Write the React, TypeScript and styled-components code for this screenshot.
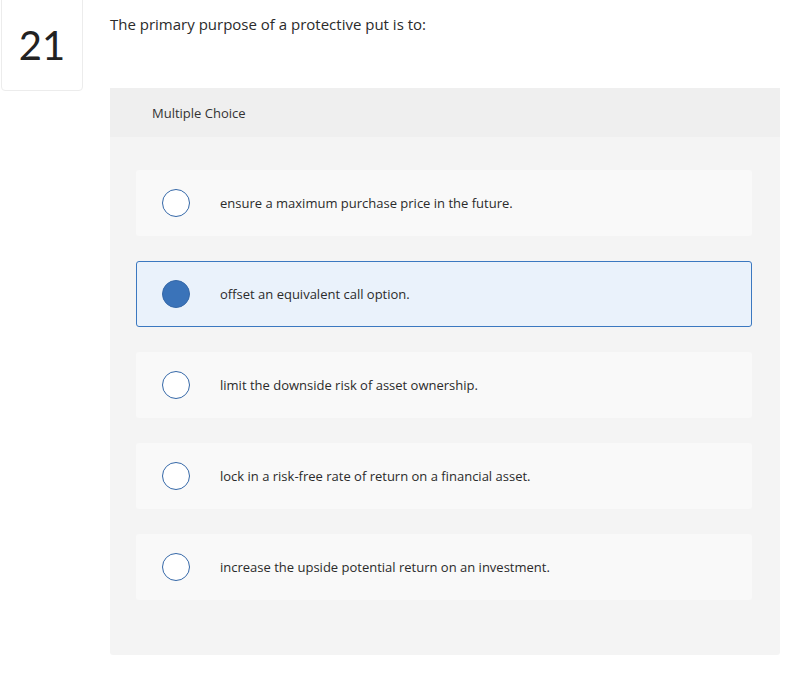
import React from 'react';
import styled, { createGlobalStyle } from 'styled-components';

const GlobalStyle = createGlobalStyle`
  body {
    margin: 0;
    background: #fff;
    font-family: "Open Sans", Lato, sans-serif;
    color: #2b2b2b;
  }
`;

const options = [
  'ensure a maximum purchase price in the future.',
  'offset an equivalent call option.',
  'limit the downside risk of asset ownership.',
  'lock in a risk-free rate of return on a financial asset.',
  'increase the upside potential return on an investment.',
];

const selectedIndex = 1;

export default function App() {
  return (
    <>
      <GlobalStyle />
      <Page>
        <NumberBox>21</NumberBox>
        <Main>
          <Question>The primary purpose of a protective put is to:</Question>
          <Panel>
            <PanelHeader>Multiple Choice</PanelHeader>
            <OptionList>
              {options.map((text, i) => (
                <Option key={text} selected={i === selectedIndex}>
                  <Radio selected={i === selectedIndex} />
                  <OptionText>{text}</OptionText>
                </Option>
              ))}
            </OptionList>
          </Panel>
        </Main>
      </Page>
    </>
  );
}

const Page = styled.div`
  display: flex;
  align-items: flex-start;
  padding-right: 8px;
`;

const NumberBox = styled.div`
  box-sizing: border-box;
  width: 82px;
  height: 100px;
  margin-top: -9px;
  margin-left: 1px;
  border: 1px solid #ececec;
  border-radius: 4px;
  display: flex;
  align-items: center;
  justify-content: center;
  padding-top: 8px;
  font-family: Lato, sans-serif;
  font-size: 40px;
  color: #222;
  flex-shrink: 0;
`;

const Main = styled.div`
  flex: 1;
  margin-left: 27px;
`;

const Question = styled.div`
  font-size: 15px;
  padding-top: 14px;
  height: 88px;
  box-sizing: border-box;
  color: #2b2b2b;
`;

const Panel = styled.div`
  background: #f4f4f4;
  border-radius: 0 0 3px 3px;
  padding-bottom: 55px;
`;

const PanelHeader = styled.div`
  background: #efefef;
  height: 49px;
  display: flex;
  align-items: center;
  padding-left: 42px;
  font-size: 13px;
  color: #333;
`;

const OptionList = styled.div`
  display: flex;
  flex-direction: column;
  gap: 25px;
  padding: 33px 28px 0 26px;
`;

const Option = styled.div<{ selected?: boolean }>`
  box-sizing: border-box;
  height: 66px;
  display: flex;
  align-items: center;
  padding-left: 25px;
  border-radius: 3px;
  background: ${({ selected }) => (selected ? '#eaf2fb' : '#f9f9f9')};
  border: 1px solid ${({ selected }) => (selected ? '#3b78c0' : 'transparent')};
`;

const Radio = styled.span<{ selected?: boolean }>`
  box-sizing: border-box;
  width: 28px;
  height: 28px;
  border-radius: 50%;
  border: 1.5px solid #3568a8;
  background: ${({ selected }) => (selected ? '#3a73b9' : '#fff')};
  flex-shrink: 0;
`;

const OptionText = styled.span`
  margin-left: 30px;
  font-size: 13px;
  color: #2b2b2b;
`;
